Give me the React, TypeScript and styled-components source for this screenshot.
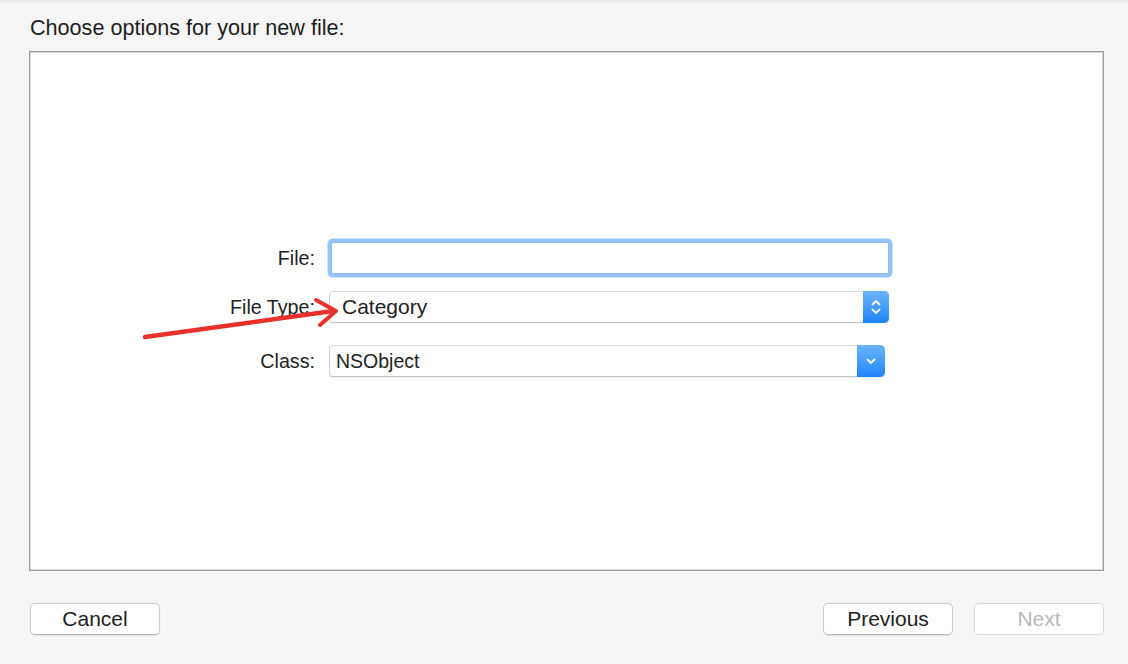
import React from 'react';
import styled, { createGlobalStyle } from 'styled-components';

const GlobalStyle = createGlobalStyle`
  html, body {
    margin: 0;
    padding: 0;
    background: #f5f5f5;
  }
  * {
    box-sizing: border-box;
  }
`;

export default function App() {
  return (
    <>
      <GlobalStyle />
      <Page>
        <Header>Choose options for your new file:</Header>
        <Panel>
          <Form>
            <Label>File:</Label>
            <TextField type="text" />

            <Label $top={17}>File Type:</Label>
            <Popup $width={560} $top={17}>
              <PopupValue $size={21} $pad={12}>Category</PopupValue>
              <Stepper $width={26}>
                <svg width="12" height="18" viewBox="0 0 12 18" fill="none" stroke="#fff" strokeWidth="1.8" strokeLinecap="round" strokeLinejoin="round">
                  <path d="M2.5 6.5 L6 3 L9.5 6.5" />
                  <path d="M2.5 11.5 L6 15 L9.5 11.5" />
                </svg>
              </Stepper>
            </Popup>

            <Label $top={22}>Class:</Label>
            <Popup $width={556} $top={22}>
              <PopupValue $size={19.5} $pad={6}>NSObject</PopupValue>
              <Stepper $width={28}>
                <svg width="12" height="10" viewBox="0 0 12 10" fill="none" stroke="#fff" strokeWidth="1.8" strokeLinecap="round" strokeLinejoin="round">
                  <path d="M2.5 3.5 L6 7 L9.5 3.5" />
                </svg>
              </Stepper>
            </Popup>
          </Form>
        </Panel>
        <Footer>
          <Button>Cancel</Button>
          <Spacer />
          <Button>Previous</Button>
          <Button disabled>Next</Button>
        </Footer>
        <Arrow width="1128" height="664" viewBox="0 0 1128 664">
          <g fill="none" stroke="#e8302c" strokeLinecap="round" strokeLinejoin="round">
            <path d="M145 337 L333 311" strokeWidth="4.5" />
            <path d="M316 300 L336 311 L320 325" strokeWidth="4" />
          </g>
        </Arrow>
      </Page>
    </>
  );
}

const Page = styled.div`
  position: relative;
  width: 1128px;
  height: 664px;
  display: flex;
  flex-direction: column;
  padding: 0 24px 0 29px;
  border-top: 3px solid #ebebeb;
  background: #f5f5f5;
  font-family: "Liberation Sans", Arial, sans-serif;
  color: #222;
  overflow: hidden;
`;

const Header = styled.div`
  height: 48px;
  padding-top: 13px;
  padding-left: 1px;
  font-size: 21.6px;
  line-height: 24px;
  color: #1e1e1e;
`;

const Panel = styled.div`
  height: 520px;
  background: #fff;
  border: 1px solid #9c9c9c;
  box-shadow: inset 0 0 0 1px #d6d6d6;
  padding: 190px 0 0 194px;
`;

const Form = styled.div`
  display: grid;
  grid-template-columns: 91px auto;
  column-gap: 14px;
  align-items: center;
  justify-items: start;
`;

const Label = styled.div<{ $top?: number }>`
  justify-self: end;
  margin-top: ${({ $top }) => $top ?? 0}px;
  font-size: 19.7px;
  line-height: 22px;
  color: #222;
`;

const TextField = styled.input`
  width: 558px;
  height: 32px;
  margin-left: 2px;
  border: 1px solid #8ebdee;
  border-radius: 2px;
  box-shadow: 0 0 0 3.5px #94c4f7;
  background: #fff;
  outline: none;
  font: inherit;
`;

const Popup = styled.div<{ $width: number; $top?: number }>`
  display: flex;
  align-items: stretch;
  width: ${({ $width }) => $width}px;
  height: 32px;
  margin-top: ${({ $top }) => $top ?? 0}px;
  border: 1px solid #d2d2d2;
  border-top-color: #dedede;
  border-bottom-color: #c4c4c4;
  border-radius: 4px;
  background: #fff;
  box-shadow: 0 1px 0 rgba(0, 0, 0, 0.04);
`;

const PopupValue = styled.div<{ $size: number; $pad: number }>`
  flex: 1;
  display: flex;
  align-items: center;
  padding-left: ${({ $pad }) => $pad}px;
  font-size: ${({ $size }) => $size}px;
  color: #222;
`;

const Stepper = styled.div<{ $width: number }>`
  width: ${({ $width }) => $width}px;
  margin: -1px -1px -1px 0;
  display: flex;
  align-items: center;
  justify-content: center;
  border-radius: 0 5px 5px 0;
  background: linear-gradient(#6db5fb, #1e84fa);
`;

const Footer = styled.div`
  display: flex;
  align-items: center;
  gap: 21px;
  margin-top: 32px;
  padding-left: 1px;
`;

const Spacer = styled.div`
  flex: 1;
`;

const Button = styled.button`
  width: 130px;
  height: 32px;
  padding: 0;
  border: 1px solid #cbcbcb;
  border-bottom-color: #b8b8b8;
  border-radius: 5px;
  background: #fff;
  box-shadow: 0 1px 1px rgba(0, 0, 0, 0.08);
  font-family: "Liberation Sans", Arial, sans-serif;
  font-size: 21px;
  color: #222;

  &:disabled {
    color: #b9b9b9;
    border-color: #dadada;
    box-shadow: none;
  }
`;

const Arrow = styled.svg`
  position: absolute;
  left: 0;
  top: -3px;
  pointer-events: none;
`;
